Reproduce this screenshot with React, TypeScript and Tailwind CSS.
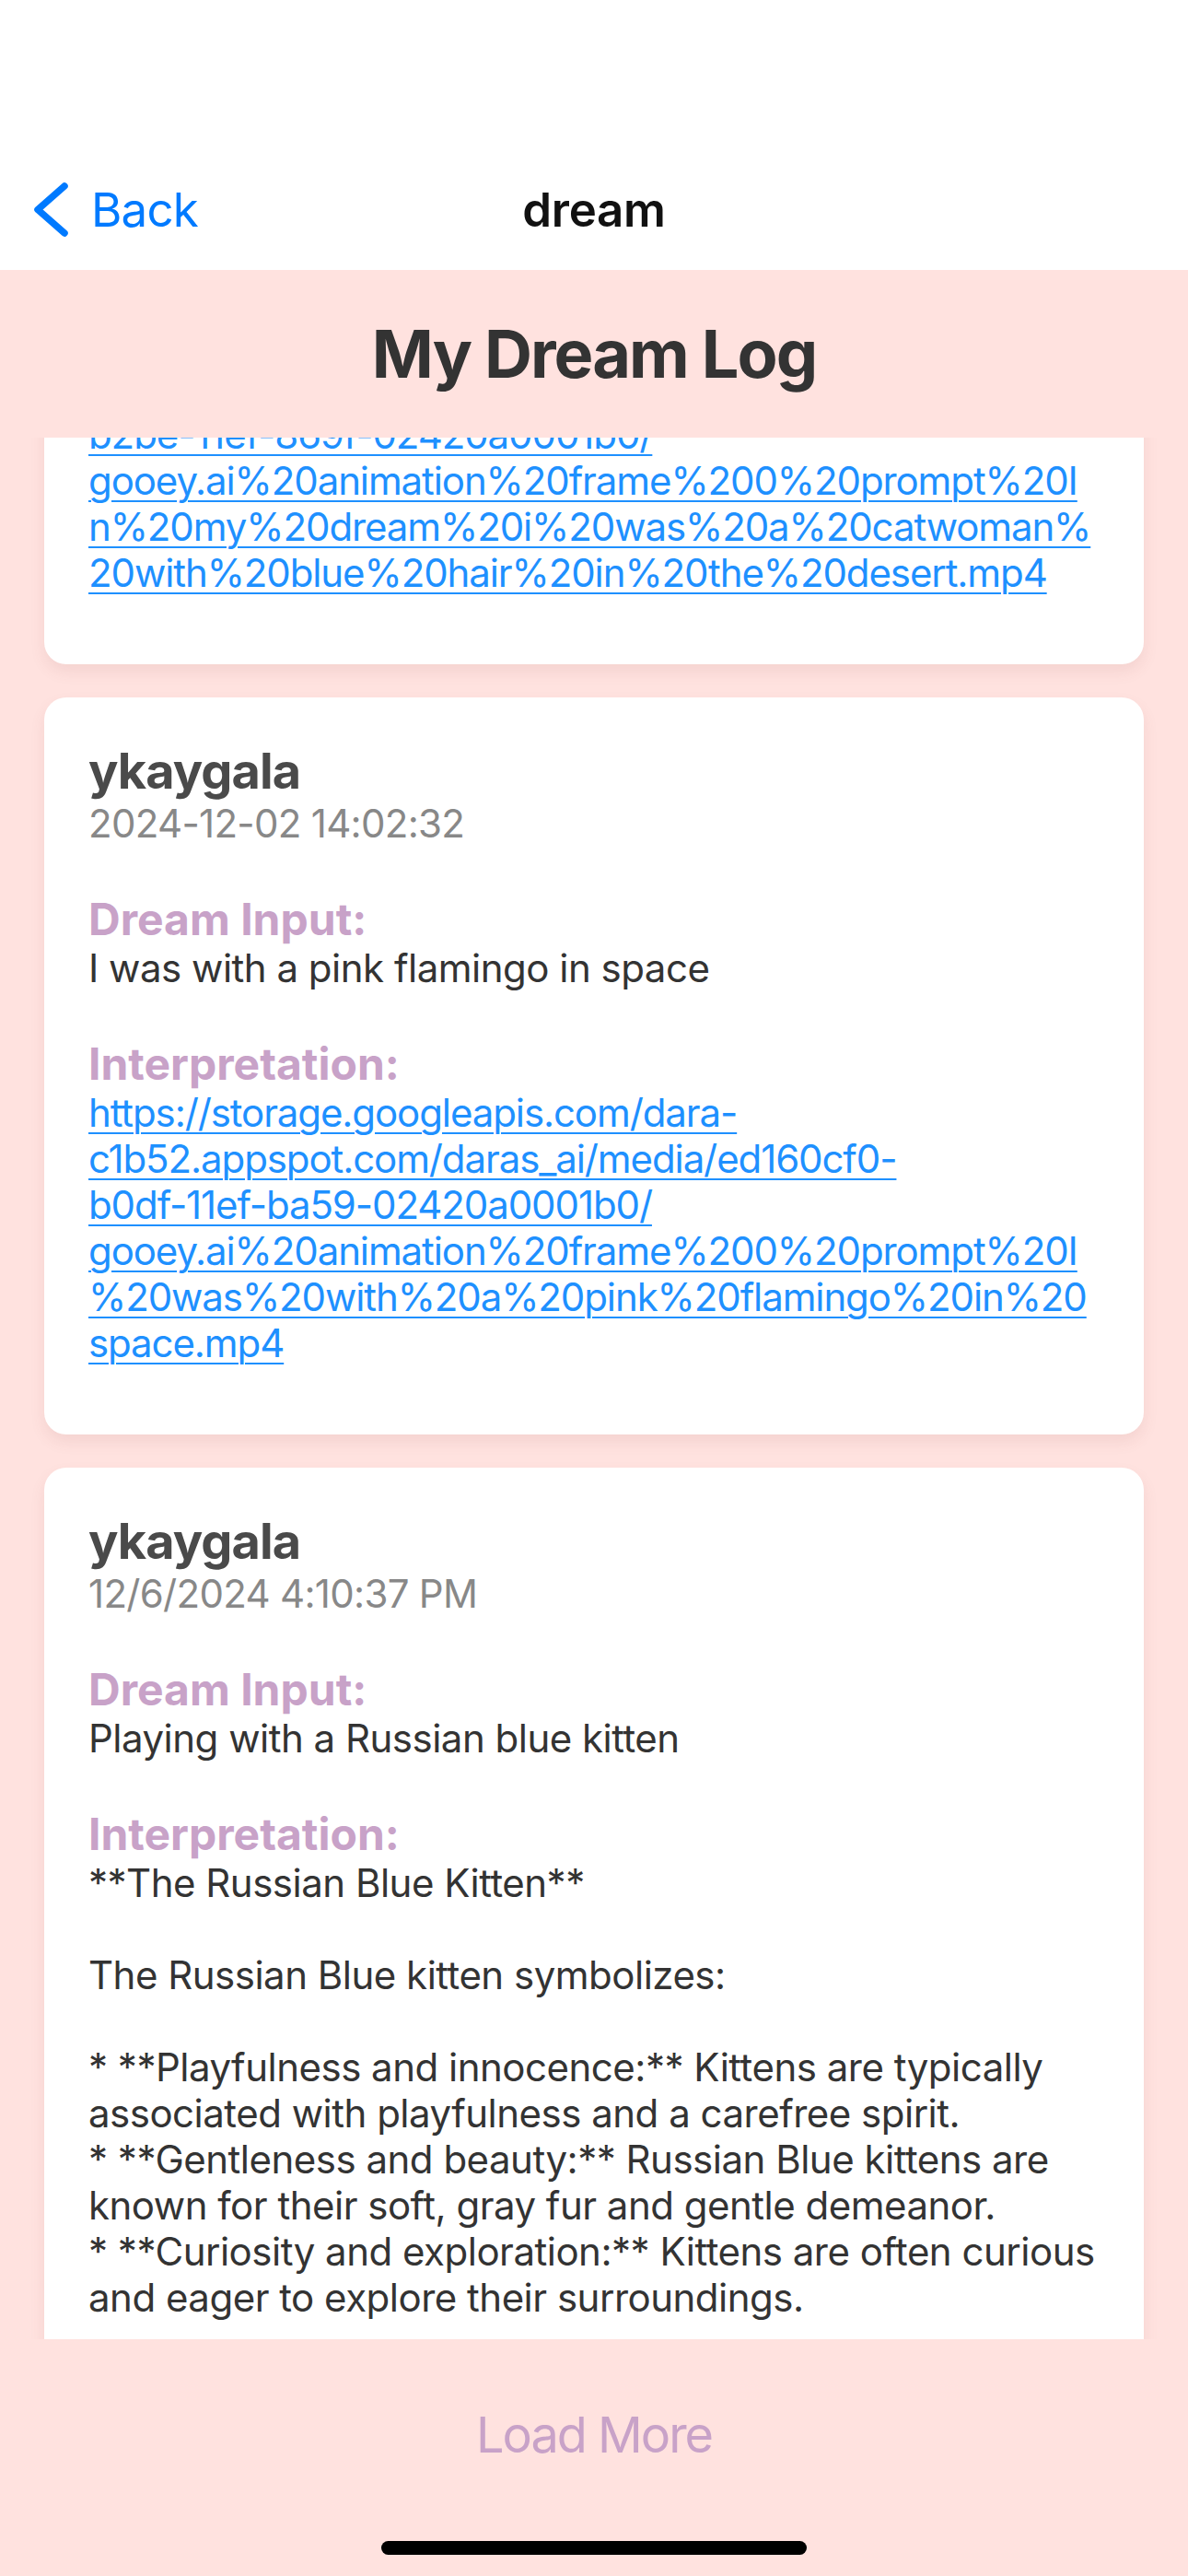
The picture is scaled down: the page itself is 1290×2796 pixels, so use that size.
import React from "react";

const linkCls =
  "block whitespace-nowrap text-[#1e90ff] underline decoration-[2px] underline-offset-[6px] tracking-[-1.1px]";

function Card({
  user,
  date,
  input,
  children,
}: {
  user: string;
  date: string;
  input: string;
  children: React.ReactNode;
}) {
  return (
    <div className="rounded-[24px] bg-white px-[48px] pt-[48px] pb-[74px] shadow-[0_8px_16px_rgba(150,80,80,0.10)]">
      <div className="text-[54px] leading-[64px] font-bold tracking-[-0.9px] text-[#4a4a4a]">{user}</div>
      <div className="text-[42px] leading-[50px] tracking-[-0.7px] text-[#888888]">{date}</div>
      <div className="mt-[50px] text-[48px] leading-[57px] font-bold text-[#c8a2c8]">Dream Input:</div>
      <div className="whitespace-nowrap text-[42px] leading-[50px] tracking-[-0.5px] text-[#333333]">{input}</div>
      <div className="mt-[50px] text-[48px] leading-[57px] font-bold text-[#c8a2c8]">Interpretation:</div>
      <div className="text-[42px] leading-[50px] tracking-[-0.5px] text-[#333333]">{children}</div>
    </div>
  );
}

export default function App() {
  return (
    <div className="relative flex h-[2796px] w-[1290px] flex-col overflow-hidden bg-[#ffe2df] font-[Inter,sans-serif]">
      {/* Nav bar */}
      <div className="h-[293px] shrink-0 bg-white pt-[162px]">
        <div className="grid h-[131px] grid-cols-[1fr_auto_1fr] items-center">
          <div className="flex items-center pl-[37px]">
            <svg width="40" height="60" viewBox="0 0 40 60" className="shrink-0">
              <path
                d="M33 4 L4 29.5 L33 55"
                fill="none"
                stroke="#007aff"
                strokeWidth="7.5"
                strokeLinecap="round"
                strokeLinejoin="round"
              />
            </svg>
            <span className="ml-[22px] text-[51px] leading-[60px] tracking-[-0.8px] text-[#007aff]">Back</span>
          </div>
          <div className="text-[51px] leading-[60px] font-semibold tracking-[-0.3px] text-[#111111]">dream</div>
          <div />
        </div>
      </div>

      {/* Title */}
      <div className="shrink-0 pt-[48px] pb-[48px] text-center text-[72px] leading-[86px] font-bold tracking-[-2px] text-[#333333]">
        My Dream Log
      </div>

      {/* List (scrolled) */}
      <div className="h-[2064px] shrink-0 overflow-hidden px-[48px]">
        <div className="-mt-[554px] flex flex-col gap-[36px] pb-[48px]">
          <Card user="ykaygala" date="2024-12-02 13:40:11" input="In my dream i was a catwoman">
            <span className={linkCls}>https://storage.googleapis.com/dara-</span>
            <span className={linkCls}>c1b52.appspot.com/daras_ai/media/c4d8a1e2-</span>
            <span className={linkCls}>b2be-11ef-869f-02420a0001b0/</span>
            <span className={linkCls}>gooey.ai%20animation%20frame%200%20prompt%20I</span>
            <span className={linkCls}>n%20my%20dream%20i%20was%20a%20catwoman%</span>
            <span className={linkCls}>20with%20blue%20hair%20in%20the%20desert.mp4</span>
          </Card>

          <Card user="ykaygala" date="2024-12-02 14:02:32" input="I was with a pink flamingo in space">
            <span className={linkCls}>https://storage.googleapis.com/dara-</span>
            <span className={linkCls}>c1b52.appspot.com/daras_ai/media/ed160cf0-</span>
            <span className={linkCls}>b0df-11ef-ba59-02420a0001b0/</span>
            <span className={linkCls}>gooey.ai%20animation%20frame%200%20prompt%20I</span>
            <span className={linkCls}>%20was%20with%20a%20pink%20flamingo%20in%20</span>
            <span className={linkCls}>space.mp4</span>
          </Card>

          <Card user="ykaygala" date="12/6/2024 4:10:37 PM" input="Playing with a Russian blue kitten">
            <div className="whitespace-nowrap">**The Russian Blue Kitten**</div>
            <div className="h-[50px]" />
            <div className="whitespace-nowrap">The Russian Blue kitten symbolizes:</div>
            <div className="h-[50px]" />
            <div className="whitespace-nowrap">* **Playfulness and innocence:** Kittens are typically</div>
            <div className="whitespace-nowrap">associated with playfulness and a carefree spirit.</div>
            <div className="whitespace-nowrap">* **Gentleness and beauty:** Russian Blue kittens are</div>
            <div className="whitespace-nowrap">known for their soft, gray fur and gentle demeanor.</div>
            <div className="whitespace-nowrap">* **Curiosity and exploration:** Kittens are often curious</div>
            <div className="whitespace-nowrap">and eager to explore their surroundings.</div>
            <div className="h-[50px]" />
            <div className="whitespace-nowrap">**Interpretation:**</div>
            <div className="h-[50px]" />
            <div className="whitespace-nowrap">Dreaming of playing with a Russian Blue kitten</div>
            <div className="whitespace-nowrap">suggests a desire for joy and lightheartedness.</div>
          </Card>
        </div>
      </div>

      {/* Load more */}
      <div className="flex-1 pt-[72px] text-center">
        <span className="text-[54px] leading-[64px] tracking-[-2px] text-[#c8a2c8]">Load More</span>
      </div>

      {/* Home indicator */}
      <div className="absolute bottom-[23px] left-1/2 h-[15px] w-[462px] -translate-x-1/2 rounded-full bg-black" />
    </div>
  );
}
